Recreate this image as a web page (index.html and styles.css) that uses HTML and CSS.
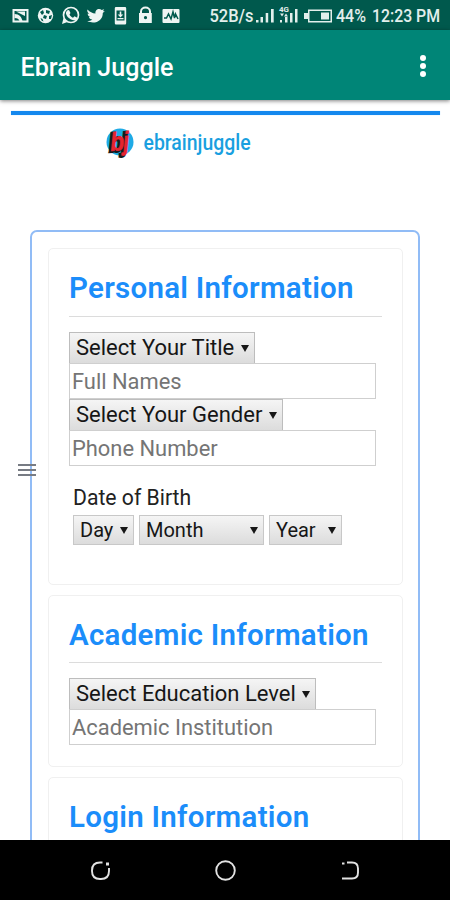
FILE: index.html
```html
<!DOCTYPE html>
<html lang="en">
<head>
<meta charset="utf-8">
<title>Ebrain Juggle</title>
<link rel="stylesheet" href="styles.css">
</head>
<body>
<div class="screen">
  <div class="status">
    <svg class="status-icons" width="182" height="30" viewBox="0 0 182 30" fill="#eef5f3">
      <path fill-rule="evenodd" d="M12.500 9h16v13.500h-16zM14.500 11v9.500h12V11z"/>
      <path d="M16 11.500l9 4.500v-4.500zM14.500 14c5 0 7 3 8 7h-3c-.6-2-2-3-5-3z"/>
      <circle cx="45.500" cy="15.500" r="7.700"/>
      <path fill="#00594d" d="M40 12l3-2 1 3-2 2zM46 10l4 1-1 3-3-1zM44 15l3 1-1 3-3-1zM49 16l3-1-1 4-2 0zM40.500 18l2 1 1 2.500-2-1z"/>
      <circle cx="71" cy="15" r="7.500" fill="none" stroke="#eef5f3" stroke-width="1.700"/>
      <path d="M62 24l1.500-6 4 4zM67 10.500l2-.5 1.500 3-1 1.500c1 1.800 2 2.500 3.500 3.200l1.500-1.500 2.800 1.500c0 2-2 3-4 2.500-4-1-7-4-7.500-7.500z"/>
      <path d="M87.500 9.500c2.300 2.500 4.800 3.800 8 4-.8-3.500 3.500-6 6.200-3.400l2.500-.9-1.300 2.100 1.900-.4-2 2c.2 7.500-8 12.200-15.500 8.200 2 0 3.800-.5 5-1.600-2 0-3-1-3.300-2.400h1.500c-2-.7-2.800-2-2.800-3.600l1.500.4c-1.800-1.300-2.300-3-1.700-4.400z"/>
      <path fill-rule="evenodd" d="M116 7h9a1.200 1.200 0 0 1 1.200 1.200v15a1.200 1.200 0 0 1-1.200 1.200h-9a1.200 1.200 0 0 1-1.200-1.200v-15A1.200 1.200 0 0 1 116 7zM116.500 10.500v10h8v-10z"/>
      <path d="M119.700 11.500h1.600v3h2l-2.800 3-2.800-3h2zM117.500 18h6v1.300h-6z"/>
      <path fill-rule="evenodd" d="M139 13h1v-1.500a5.500 5 0 0 1 11 0V13h.8v10H139zM142 13h7v-1.500a3.500 3 0 0 0-7 0zM145.500 16a1.600 1.600 0 1 0 .01 0z"/>
      <rect x="162.500" y="9" width="17" height="14" rx="1"/>
      <path d="M164 18h2.500l2-4 2.500 5 2-7 1.500 6 1-4 2.500 5" fill="none" stroke="#00594d" stroke-width="1.500"/>
    </svg>
    <svg class="status-info" width="241" height="30" viewBox="209 0 241 30" fill="#e3efec">
      <text x="209.500" y="22" textLength="44" lengthAdjust="spacingAndGlyphs">52B/s</text>
      <path d="M256 20h2.500v2.500H256zM260.500 17h2.500v5.500h-2.500zM265.700 13h2.500v9.500h-2.500zM271 9h2.700v13.500H271zM280 20h2v2.500h-2zM285 17h2.500v5.500H285zM290 13h2.500v9.500H290zM295 9h2.500v13.500H295z"/>
      <text class="net" x="279" y="12" textLength="10" lengthAdjust="spacingAndGlyphs">4G</text>
      <path d="M280 13.500l2 3 2-3zM284 16.500l2-3 2 3z"/>
      <path fill-rule="evenodd" d="M308 9.500h24v13h-24v-3.500h-4v-6h4zM309.500 11v10h21V11z"/>
      <path d="M321 12.500h8v7h-8z"/>
      <text x="336" y="22" textLength="30" lengthAdjust="spacingAndGlyphs">44%</text>
      <text x="372" y="22" textLength="68" lengthAdjust="spacingAndGlyphs">12:23 PM</text>
    </svg>
  </div>
  <header class="appbar">
    <h1 class="title">Ebrain Juggle</h1>
    <div class="more"><i></i><i></i><i></i></div>
  </header>
  <main class="page">
    <div class="rule"></div>
    <svg class="logo" width="300" height="44" viewBox="100 120 300 44">
      <circle cx="120" cy="142" r="13.500" fill="#1eaae6"/>
      <g class="mark" transform="translate(109.500 151) rotate(-4) scale(.88 1)">
        <text class="mark-shade" x="-.5" y="1">b</text>
        <text class="mark-shade" x="14" y="1">j</text>
        <text class="mark-face" x="1.500" y="0">b</text>
        <text class="mark-face" x="16" y="0">j</text>
      </g>
      <text class="wordmark" transform="translate(143.500 150) scale(.875 1)">ebrainjuggle</text>
    </svg>
    <div class="menu-handle"><i></i><i></i><i></i></div>
    <form class="form">
      <section class="card personal">
        <h2>Personal Information</h2>
        <div class="select s-title">Select Your Title<b></b></div>
        <input type="text" placeholder="Full Names" aria-label="Full Names">
        <div class="select s-gender">Select Your Gender<b></b></div>
        <input type="text" placeholder="Phone Number" aria-label="Phone Number">
        <div class="dob">
          <div class="dob-label">Date of Birth</div>
          <div class="dob-row">
            <div class="select small s-day">Day<b></b></div>
            <div class="select small s-month">Month<b></b></div>
            <div class="select small s-year">Year<b></b></div>
          </div>
        </div>
      </section>
      <section class="card academic">
        <h2>Academic Information</h2>
        <div class="select s-level">Select Education Level<b></b></div>
        <input type="text" placeholder="Academic Institution" aria-label="Academic Institution">
      </section>
      <section class="card login">
        <h2>Login Information</h2>
      </section>
    </form>
  </main>
  <nav class="navbar">
    <svg width="450" height="59" viewBox="0 841 450 59" fill="none" stroke="#e2e2e2" stroke-width="1.900">
      <path d="M102.500 862.500H100q-8 0-8 8v.5q0 8 8 8h1q8 0 8-8v-3"/>
      <path d="M106 864h3" stroke-width="3"/>
      <circle cx="225.500" cy="870.500" r="9.300"/>
      <path d="M347 862.500h5q6 0 6 6v4q0 6-6 6h-10M342 863.500h2.500"/>
    </svg>
  </nav>
</div>
</body>
</html>
```
FILE: styles.css
```css
* { box-sizing: border-box; }
body { margin: 0; font-family: Roboto, sans-serif; background: #fff; }
.screen { width: 450px; height: 900px; display: flex; flex-direction: column; overflow: hidden; }

.status { height: 30px; flex: none; background: #00594d; display: flex; justify-content: space-between; }
.status-info { font-size: 17.5px; font-weight: 500; }
.status-info .net { font-size: 8px; font-weight: 700; }

.appbar { position: relative; z-index: 1; height: 70px; flex: none; background: #008577; display: flex; align-items: center; justify-content: space-between; padding: 5px 24px 0 20.500px; box-shadow: 0 1px 4px rgba(0, 0, 0, .5); }
.title { margin: 0; font-size: 25.100px; line-height: 31px; font-weight: 500; color: #fff; white-space: nowrap; }
.more { display: flex; flex-direction: column; gap: 2px; padding-bottom: 4px; }
.more i { width: 6px; height: 6px; border-radius: 50%; background: #fff; }

.page { position: relative; height: 740px; flex: none; padding: 11px 10px 0 11px; overflow: hidden; background: #fff; }
.rule { height: 4px; background: #1488ee; box-shadow: 0 0 1px #86c8ff; }
.logo { display: block; margin: 5px 0 0 89px; }
.mark { font: italic 700 26px "Liberation Sans", sans-serif; }
.mark-shade { fill: #151a20; stroke: #151a20; stroke-width: 2.500px; }
.mark-face { fill: #e6242f; stroke: #e6242f; stroke-width: .6px; }
.wordmark { font: 500 22.200px Roboto, sans-serif; fill: #199fe0; }
.menu-handle { position: absolute; z-index: 1; left: 18px; top: 364px; width: 18px; display: flex; flex-direction: column; gap: 3px; }
.menu-handle i { height: 2px; background: #777b83; }

.form { width: 390px; height: 700px; margin: 66px 0 0 19px; padding: 16px 16px 0; border: 2px solid #91bcf6; border-radius: 7px; display: flex; flex-direction: column; gap: 10px; }
.card { width: 355px; flex: none; border: 1px solid #f0f0f0; border-radius: 5px; padding: 19px 20px 0; display: flex; flex-direction: column; align-items: flex-start; }
.personal { height: 337px; }
.academic { height: 172px; }
.login { height: 170px; }
h2 { margin: 0 0 15px; width: 313px; height: 49px; line-height: 41px; font-size: 29.500px; letter-spacing: .27px; font-weight: 600; color: #1b8dfa; border-bottom: 1px solid #dcdcdc; white-space: nowrap; }
.academic h2 { height: 48px; }
.select { height: 32px; flex: none; display: flex; align-items: center; justify-content: space-between; padding: 0 5px 0 6px; border: 1px solid #bdbdbd; border-bottom-color: #999; background: linear-gradient(#f5f5f5, #dcdcdc); font-size: 22px; line-height: 30px; color: #161616; white-space: nowrap; }
.select b { border: 4px solid transparent; border-top: 7px solid #161616; border-bottom: 0; width: 0; height: 0; }
.s-title { width: 186px; }
.s-gender { width: 214px; }
.s-level { width: 247px; }
input { width: 307px; height: 36px; flex: none; margin: -1px 0 0; padding: 0 2px; border: 1px solid #cfcfcf; background: #fff; font: 400 21.900px Roboto, sans-serif; outline: none; }
input::placeholder { color: #757575; opacity: 1; }
.dob { padding: 17px 0 0 4px; }
.dob-label { font-size: 21.200px; line-height: 30px; color: #222; }
.dob-row { display: flex; gap: 5px; margin-top: 2px; }
.small { height: 30px; font-size: 20px; line-height: 28px; border-color: #c8c8c8; }
.s-day { width: 61px; }
.s-month { width: 125px; }
.s-year { width: 73px; }

.navbar { height: 60px; flex: none; background: #000; }
.navbar svg { display: block; margin-top: 1px; }
```
